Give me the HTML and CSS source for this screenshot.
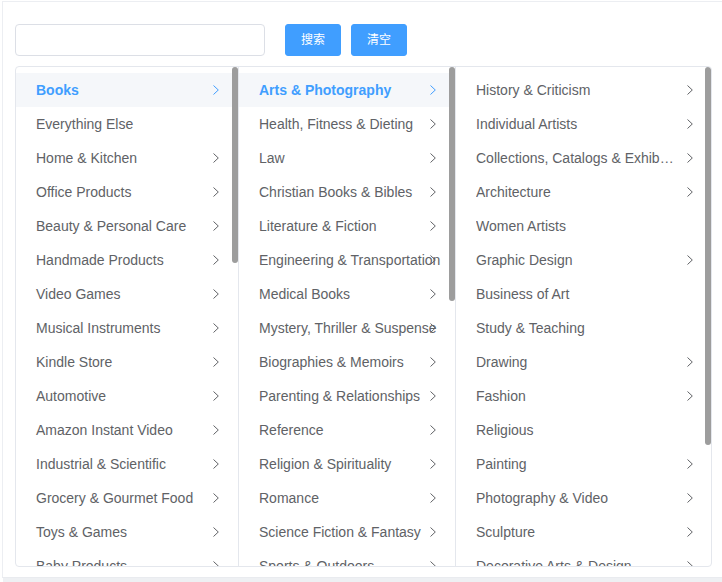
FILE: index.html
```html
<!DOCTYPE html>
<html lang="en">
<head>
<meta charset="utf-8">
<title>Cascader</title>
<link rel="stylesheet" href="styles.css">
</head>
<body>
<div class="shell">
  <div class="toolbar">
    <input class="search-input" type="text">
    <button class="btn">搜索</button>
    <button class="btn">清空</button>
  </div>
  <div class="panel">
    <div class="menu menu-1">
      <ul class="list">
        <li class="node active">Books<svg class="arrow" viewBox="0 0 6 10"><polyline points="0.5,0.5 5.3,5 0.5,9.5"/></svg></li>
        <li class="node">Everything Else</li>
        <li class="node">Home &amp; Kitchen<svg class="arrow" viewBox="0 0 6 10"><polyline points="0.5,0.5 5.3,5 0.5,9.5"/></svg></li>
        <li class="node">Office Products<svg class="arrow" viewBox="0 0 6 10"><polyline points="0.5,0.5 5.3,5 0.5,9.5"/></svg></li>
        <li class="node">Beauty &amp; Personal Care<svg class="arrow" viewBox="0 0 6 10"><polyline points="0.5,0.5 5.3,5 0.5,9.5"/></svg></li>
        <li class="node">Handmade Products<svg class="arrow" viewBox="0 0 6 10"><polyline points="0.5,0.5 5.3,5 0.5,9.5"/></svg></li>
        <li class="node">Video Games<svg class="arrow" viewBox="0 0 6 10"><polyline points="0.5,0.5 5.3,5 0.5,9.5"/></svg></li>
        <li class="node">Musical Instruments<svg class="arrow" viewBox="0 0 6 10"><polyline points="0.5,0.5 5.3,5 0.5,9.5"/></svg></li>
        <li class="node">Kindle Store<svg class="arrow" viewBox="0 0 6 10"><polyline points="0.5,0.5 5.3,5 0.5,9.5"/></svg></li>
        <li class="node">Automotive<svg class="arrow" viewBox="0 0 6 10"><polyline points="0.5,0.5 5.3,5 0.5,9.5"/></svg></li>
        <li class="node">Amazon Instant Video<svg class="arrow" viewBox="0 0 6 10"><polyline points="0.5,0.5 5.3,5 0.5,9.5"/></svg></li>
        <li class="node">Industrial &amp; Scientific<svg class="arrow" viewBox="0 0 6 10"><polyline points="0.5,0.5 5.3,5 0.5,9.5"/></svg></li>
        <li class="node">Grocery &amp; Gourmet Food<svg class="arrow" viewBox="0 0 6 10"><polyline points="0.5,0.5 5.3,5 0.5,9.5"/></svg></li>
        <li class="node">Toys &amp; Games<svg class="arrow" viewBox="0 0 6 10"><polyline points="0.5,0.5 5.3,5 0.5,9.5"/></svg></li>
        <li class="node">Baby Products<svg class="arrow" viewBox="0 0 6 10"><polyline points="0.5,0.5 5.3,5 0.5,9.5"/></svg></li>
      </ul>
      <div class="thumb thumb-1"></div>
    </div>
    <div class="menu menu-2">
      <ul class="list">
        <li class="node active">Arts &amp; Photography<svg class="arrow" viewBox="0 0 6 10"><polyline points="0.5,0.5 5.3,5 0.5,9.5"/></svg></li>
        <li class="node">Health, Fitness &amp; Dieting<svg class="arrow" viewBox="0 0 6 10"><polyline points="0.5,0.5 5.3,5 0.5,9.5"/></svg></li>
        <li class="node">Law<svg class="arrow" viewBox="0 0 6 10"><polyline points="0.5,0.5 5.3,5 0.5,9.5"/></svg></li>
        <li class="node">Christian Books &amp; Bibles<svg class="arrow" viewBox="0 0 6 10"><polyline points="0.5,0.5 5.3,5 0.5,9.5"/></svg></li>
        <li class="node">Literature &amp; Fiction<svg class="arrow" viewBox="0 0 6 10"><polyline points="0.5,0.5 5.3,5 0.5,9.5"/></svg></li>
        <li class="node">Engineering &amp; Transportation<svg class="arrow" viewBox="0 0 6 10"><polyline points="0.5,0.5 5.3,5 0.5,9.5"/></svg></li>
        <li class="node">Medical Books<svg class="arrow" viewBox="0 0 6 10"><polyline points="0.5,0.5 5.3,5 0.5,9.5"/></svg></li>
        <li class="node">Mystery, Thriller &amp; Suspense<svg class="arrow" viewBox="0 0 6 10"><polyline points="0.5,0.5 5.3,5 0.5,9.5"/></svg></li>
        <li class="node">Biographies &amp; Memoirs<svg class="arrow" viewBox="0 0 6 10"><polyline points="0.5,0.5 5.3,5 0.5,9.5"/></svg></li>
        <li class="node">Parenting &amp; Relationships<svg class="arrow" viewBox="0 0 6 10"><polyline points="0.5,0.5 5.3,5 0.5,9.5"/></svg></li>
        <li class="node">Reference<svg class="arrow" viewBox="0 0 6 10"><polyline points="0.5,0.5 5.3,5 0.5,9.5"/></svg></li>
        <li class="node">Religion &amp; Spirituality<svg class="arrow" viewBox="0 0 6 10"><polyline points="0.5,0.5 5.3,5 0.5,9.5"/></svg></li>
        <li class="node">Romance<svg class="arrow" viewBox="0 0 6 10"><polyline points="0.5,0.5 5.3,5 0.5,9.5"/></svg></li>
        <li class="node">Science Fiction &amp; Fantasy<svg class="arrow" viewBox="0 0 6 10"><polyline points="0.5,0.5 5.3,5 0.5,9.5"/></svg></li>
        <li class="node">Sports &amp; Outdoors<svg class="arrow" viewBox="0 0 6 10"><polyline points="0.5,0.5 5.3,5 0.5,9.5"/></svg></li>
      </ul>
      <div class="thumb thumb-2"></div>
    </div>
    <div class="menu menu-3">
      <ul class="list">
        <li class="node"><span class="label">History &amp; Criticism</span><svg class="arrow" viewBox="0 0 6 10"><polyline points="0.5,0.5 5.3,5 0.5,9.5"/></svg></li>
        <li class="node"><span class="label">Individual Artists</span><svg class="arrow" viewBox="0 0 6 10"><polyline points="0.5,0.5 5.3,5 0.5,9.5"/></svg></li>
        <li class="node"><span class="label">Collections, Catalogs &amp; Exhibitions</span><svg class="arrow" viewBox="0 0 6 10"><polyline points="0.5,0.5 5.3,5 0.5,9.5"/></svg></li>
        <li class="node"><span class="label">Architecture</span><svg class="arrow" viewBox="0 0 6 10"><polyline points="0.5,0.5 5.3,5 0.5,9.5"/></svg></li>
        <li class="node"><span class="label">Women Artists</span></li>
        <li class="node"><span class="label">Graphic Design</span><svg class="arrow" viewBox="0 0 6 10"><polyline points="0.5,0.5 5.3,5 0.5,9.5"/></svg></li>
        <li class="node"><span class="label">Business of Art</span></li>
        <li class="node"><span class="label">Study &amp; Teaching</span></li>
        <li class="node"><span class="label">Drawing</span><svg class="arrow" viewBox="0 0 6 10"><polyline points="0.5,0.5 5.3,5 0.5,9.5"/></svg></li>
        <li class="node"><span class="label">Fashion</span><svg class="arrow" viewBox="0 0 6 10"><polyline points="0.5,0.5 5.3,5 0.5,9.5"/></svg></li>
        <li class="node"><span class="label">Religious</span></li>
        <li class="node"><span class="label">Painting</span><svg class="arrow" viewBox="0 0 6 10"><polyline points="0.5,0.5 5.3,5 0.5,9.5"/></svg></li>
        <li class="node"><span class="label">Photography &amp; Video</span><svg class="arrow" viewBox="0 0 6 10"><polyline points="0.5,0.5 5.3,5 0.5,9.5"/></svg></li>
        <li class="node"><span class="label">Sculpture</span><svg class="arrow" viewBox="0 0 6 10"><polyline points="0.5,0.5 5.3,5 0.5,9.5"/></svg></li>
        <li class="node"><span class="label">Decorative Arts &amp; Design</span><svg class="arrow" viewBox="0 0 6 10"><polyline points="0.5,0.5 5.3,5 0.5,9.5"/></svg></li>
      </ul>
      <div class="thumb thumb-3"></div>
    </div>
  </div>
</div>
<div class="bottom-strip"></div>
</body>
</html>
```

FILE: styles.css
```css
html, body {
  margin: 0;
  padding: 0;
  background: #ffffff;
}

body {
  font-family: "Liberation Sans", Arial, "Noto Sans CJK SC", sans-serif;
  color: #606266;
  overflow: hidden;
}

.shell {
  margin: 1px 0 0 2px;
  border-top: 1px solid #eceef2;
  border-left: 1px solid #eceef2;
  border-bottom: 1px solid #e9ebef;
  height: 553px;
  padding: 22px 0 0 12px;
}

.toolbar {
  display: flex;
  align-items: center;
  height: 32px;
}

.search-input {
  box-sizing: border-box;
  width: 250px;
  height: 32px;
  margin: 0 20px 0 0;
  padding: 0 15px;
  border: 1px solid #dcdfe6;
  border-radius: 4px;
  outline: none;
  font-family: inherit;
  font-size: 14px;
}

.btn {
  box-sizing: border-box;
  width: 56px;
  height: 32px;
  margin: 0 10px 0 0;
  padding: 0;
  border: 1px solid #409eff;
  border-radius: 3px;
  background: #409eff;
  color: #ffffff;
  font-family: "Liberation Sans", Arial, "Noto Sans CJK SC", sans-serif;
  font-size: 12px;
  line-height: 30px;
}

.panel {
  display: flex;
  box-sizing: border-box;
  width: 697px;
  height: 501px;
  margin-top: 10px;
  border: 1px solid #e4e7ed;
  border-radius: 4px;
  overflow: hidden;
}

.menu {
  position: relative;
  box-sizing: border-box;
  height: 100%;
  overflow: hidden;
  border-right: 1px solid #e4e7ed;
}

.menu-1 { width: 223px; }
.menu-2 { width: 217px; }
.menu-3 { flex: 1; border-right: none; }

.list {
  list-style: none;
  margin: 0;
  padding: 6px 0;
}

.node {
  position: relative;
  height: 34px;
  line-height: 34px;
  padding: 0 30px 0 20px;
  font-size: 14px;
  color: #606266;
  white-space: nowrap;
}

.node.active {
  background: #f5f7fa;
  color: #409eff;
  font-weight: bold;
}

.menu-3 .node {
  padding-right: 37px;
}

.label {
  display: block;
  overflow: hidden;
  text-overflow: ellipsis;
  white-space: nowrap;
}

.arrow {
  position: absolute;
  right: 19px;
  top: 12px;
  width: 6px;
  height: 10px;
  fill: none;
  stroke: #606266;
  stroke-width: 1;
}

.menu-3 .arrow {
  right: 18px;
}

.node.active .arrow {
  stroke: #409eff;
}

.thumb {
  position: absolute;
  top: 0;
  right: 0;
  width: 6px;
  border-radius: 3px;
  background: #9d9d9d;
}

.thumb-1 { height: 196px; }
.thumb-2 { height: 234px; }
.thumb-3 { height: 378px; }

.bottom-strip {
  height: 4px;
  margin: 0 0 0 3px;
  background: #eef0f3;
}
```
